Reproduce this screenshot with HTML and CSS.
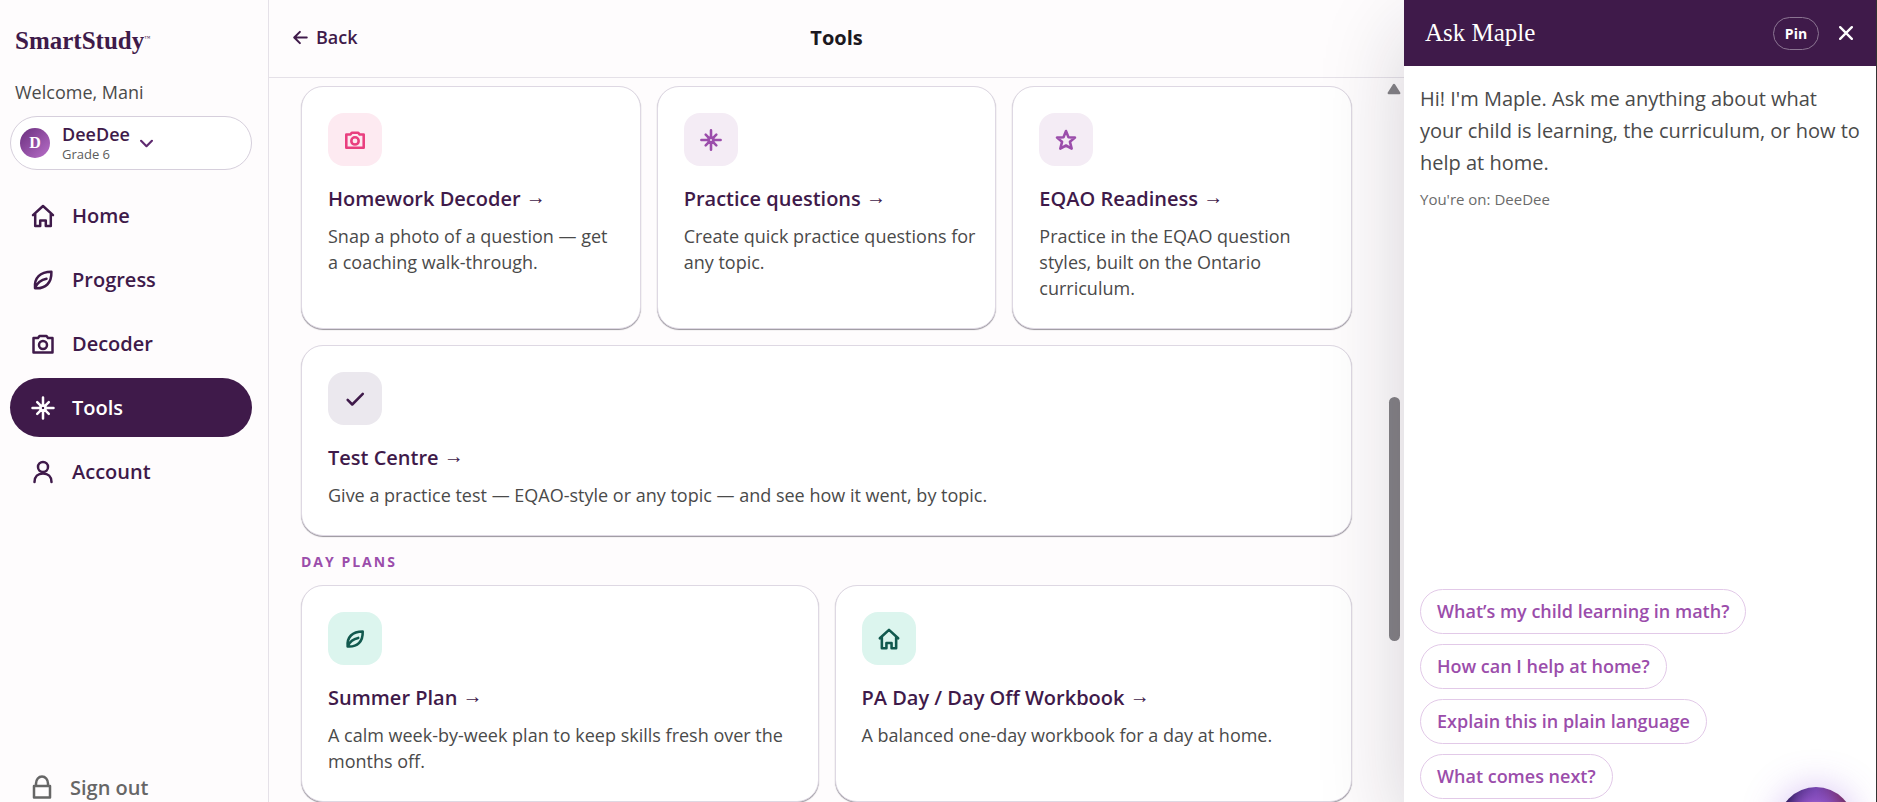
FILE: index.html
```html
<!DOCTYPE html>
<html lang="en">
<head>
<meta charset="utf-8">
<title>SmartStudy – Tools</title>
<link rel="stylesheet" href="styles.css">
</head>
<body>
<svg class="sprite" aria-hidden="true">
  <symbol id="i-home" viewBox="0 0 24 24"><path d="M2 11.2 12 2l10 9.2M4.2 10v12h5v-5.6h5.6V22h5V10"/></symbol>
  <symbol id="i-leaf" viewBox="0 0 24 24"><path d="M4 20.2C3 10 9 3.8 20.4 3.8 20.8 15 14.500 21 4 20.200zM4.200 19.500C6.500 14.500 10 12 15.500 10.800"/></symbol>
  <symbol id="i-camera" viewBox="0 0 24 24"><path d="M2.500 6H7l1.500-2h7L17 6h4.500v14.500h-19z"/><circle cx="12" cy="13" r="4"/></symbol>
  <symbol id="i-spark" viewBox="0 0 24 24"><circle cx="12" cy="12" r="2.600"/><path d="M12 1.500v7.900M12 14.600v7.900M1.500 12h7.900M14.600 12h7.900M6.200 6.200l4 4M13.800 13.800l4 4M17.800 6.200l-4 4M10.200 13.800l-4 4"/></symbol>
  <symbol id="i-user" viewBox="0 0 24 24"><circle cx="12" cy="7" r="5"/><path d="M3.500 22c0-5.500 3.500-8.500 8.500-8.500s8.500 3 8.500 8.500"/></symbol>
  <symbol id="i-star" viewBox="0 0 24 24"><path d="m12 2.200 2.700 6.700 7.100.5-5.500 4.600 1.900 7.400L12 18l-6.200 3.400L7.700 14 2.200 9.400l7.100-.5z"/></symbol>
  <symbol id="i-check" viewBox="0 0 24 24"><path d="m4 13 5 5L20.500 6.500"/></symbol>
  <symbol id="i-lock" viewBox="0 0 24 24"><path d="M4 11h16v11.500H4zM6 11V8.500a6 7 0 0 1 12 0V11"/></symbol>
  <symbol id="i-back" viewBox="0 0 24 24"><path d="M22 12H3M11 3l-9 9 9 9"/></symbol>
  <symbol id="i-down" viewBox="0 0 24 24"><path d="m2 7 10 10L22 7"/></symbol>
  <symbol id="i-close" viewBox="0 0 24 24"><path d="m2 2 20 20M22 2 2 22"/></symbol>
</svg>

<div class="app">
  <aside class="sidebar">
    <div class="brand">SmartStudy<sup>™</sup></div>
    <p class="welcome">Welcome, Mani</p>
    <button class="profile" type="button">
      <span class="avatar">D</span>
      <span class="profile-text"><span class="profile-name">DeeDee</span><span class="profile-grade">Grade 6</span></span>
      <svg class="icon chevron"><use href="#i-down"/></svg>
    </button>
    <nav class="nav">
      <a class="nav-item" href="#home"><svg class="icon"><use href="#i-home"/></svg>Home</a>
      <a class="nav-item" href="#progress"><svg class="icon"><use href="#i-leaf"/></svg>Progress</a>
      <a class="nav-item" href="#decoder"><svg class="icon"><use href="#i-camera"/></svg>Decoder</a>
      <a class="nav-item active" href="#tools" aria-current="page"><svg class="icon"><use href="#i-spark"/></svg>Tools</a>
      <a class="nav-item" href="#account"><svg class="icon"><use href="#i-user"/></svg>Account</a>
    </nav>
    <button class="signout" type="button"><svg class="icon"><use href="#i-lock"/></svg>Sign out</button>
  </aside>

  <main class="main">
    <header class="topbar">
      <a class="back" href="#back"><svg class="icon"><use href="#i-back"/></svg>Back</a>
      <h1 class="page-title">Tools</h1>
    </header>
    <div class="scroller">
      <div class="content">
        <section class="cards">
          <a class="card" href="#homework"><span class="tile pink"><svg class="icon"><use href="#i-camera"/></svg></span><h2 class="card-title">Homework Decoder <span class="arrow">→</span></h2><p class="card-text">Snap a photo of a question — get a&nbsp;coaching walk-through.</p></a>
          <a class="card" href="#practice"><span class="tile violet"><svg class="icon"><use href="#i-spark"/></svg></span><h2 class="card-title">Practice questions <span class="arrow">→</span></h2><p class="card-text">Create quick practice questions for any topic.</p></a>
          <a class="card" href="#eqao"><span class="tile violet"><svg class="icon"><use href="#i-star"/></svg></span><h2 class="card-title">EQAO Readiness <span class="arrow">→</span></h2><p class="card-text">Practice in the EQAO question styles, built on the Ontario curriculum.</p></a>
          <a class="card wide" href="#test"><span class="tile plum"><svg class="icon"><use href="#i-check"/></svg></span><h2 class="card-title">Test Centre <span class="arrow">→</span></h2><p class="card-text">Give a practice test — EQAO-style or any topic — and see how it went, by topic.</p></a>
        </section>
        <h2 class="section-title">DAY PLANS</h2>
        <section class="cards two">
          <a class="card" href="#summer"><span class="tile mint"><svg class="icon"><use href="#i-leaf"/></svg></span><h2 class="card-title">Summer Plan <span class="arrow">→</span></h2><p class="card-text">A calm week-by-week plan to keep skills fresh over the months off.</p></a>
          <a class="card" href="#paday"><span class="tile mint"><svg class="icon"><use href="#i-home"/></svg></span><h2 class="card-title">PA Day / Day Off Workbook <span class="arrow">→</span></h2><p class="card-text">A balanced one-day workbook for a day at home.</p></a>
        </section>
      </div>
      <div class="scrollbar" aria-hidden="true">
        <svg class="scroll-up" viewBox="0 0 12 10"><path d="M6 1.500 10.500 8.500h-9z"/></svg>
        <span class="thumb"></span>
      </div>
    </div>
  </main>

  <aside class="maple">
    <header class="maple-head">
      <h2 class="maple-title">Ask Maple</h2>
      <button class="pin" type="button">Pin</button>
      <button class="close" type="button" aria-label="Close"><svg class="icon"><use href="#i-close"/></svg></button>
    </header>
    <div class="maple-body">
      <p class="maple-text">Hi! I'm Maple. Ask me anything about what your child is learning, the curriculum, or how to help at home.</p>
      <p class="maple-context">You're on: DeeDee</p>
    </div>
    <div class="chips">
      <button class="chip" type="button">What’s my child learning in math?</button>
      <button class="chip" type="button">How can I help at home?</button>
      <button class="chip" type="button">Explain this in plain language</button>
      <button class="chip" type="button">What comes next?</button>
    </div>
    <button class="orb" type="button" aria-label="Maple"></button>
  </aside>
</div>
</body>
</html>
```
FILE: styles.css
```css
* { box-sizing: border-box; }

body {
  margin: 0;
  background: #fefcfd;
  color: #3f1a4a;
  font-family: "Open Sans", "Noto Sans", sans-serif;
}

h1, h2, p { margin: 0; }
a { color: inherit; text-decoration: none; }
button { font: inherit; color: inherit; background: none; border: 0; padding: 0; }

.sprite { display: none; }

.icon {
  width: 24px;
  height: 24px;
  flex: none;
  fill: none;
  stroke: currentColor;
  stroke-width: 2.5;
  stroke-linecap: round;
  stroke-linejoin: round;
}

.app {
  display: grid;
  grid-template-columns: 269px minmax(0, 1fr) 472px;
  height: 100vh;
  overflow: hidden;
  border-right: 1px solid #333;
}

/* Sidebar */
.sidebar {
  display: flex;
  flex-direction: column;
  padding: 25px 16px 0 10px;
  border-right: 1px solid #e5e1e8;
}

.brand {
  padding-left: 5px;
  font: bold 25px/32px "Liberation Serif", serif;
}
.brand sup { font-size: 6px; font-weight: normal; line-height: 1; }

.welcome {
  padding-left: 5px;
  margin: 22px 0 11px;
  font-size: 18px;
  line-height: 26px;
  color: #4a4a4a;
}

.profile {
  display: flex;
  align-items: center;
  height: 54px;
  padding: 0 9px;
  border: 1px solid #d6cfdc;
  border-radius: 27px;
  background: #fff;
  text-align: left;
}

.avatar {
  width: 30px;
  height: 30px;
  margin-right: 12px;
  border-radius: 50%;
  background: linear-gradient(135deg, #6a2f7e, #b96fc9);
  color: #fff;
  font: bold 16px/30px "Liberation Serif", serif;
  text-align: center;
}

.profile-text { display: flex; flex-direction: column; }
.profile-name { font-size: 18px; line-height: 22px; font-weight: 600; }
.profile-grade { font-size: 13px; line-height: 18px; color: #5c5c5c; }
.chevron { width: 13px; height: 13px; margin-left: 10px; stroke-width: 4; color: #5f2a70; }

.nav { display: flex; flex-direction: column; gap: 5px; margin-top: 16px; }

.nav-item {
  display: flex;
  align-items: center;
  gap: 17px;
  height: 59px;
  padding: 0 21px;
  border-radius: 30px;
  font-size: 20px;
  font-weight: 600;
}
.nav-item.active { background: #3f1a4a; color: #fff; }

.signout {
  display: flex;
  align-items: center;
  gap: 16px;
  height: 30px;
  margin-top: auto;
  padding: 0 20px;
  font-size: 20px;
  font-weight: 600;
  color: #666;
}

/* Main column */
.main { display: flex; flex-direction: column; min-height: 0; }

.topbar {
  display: grid;
  grid-template-columns: 1fr auto 1fr;
  align-items: center;
  height: 78px;
  flex: none;
  padding: 0 24px 3px;
  border-bottom: 1px solid #e5e1e8;
}

.back {
  display: flex;
  align-items: center;
  gap: 8px;
  font-size: 18px;
  font-weight: 600;
}
.back .icon { width: 15px; height: 15px; stroke-width: 3.2; }

.page-title { font-size: 20px; font-weight: 700; color: #1c1820; }

.scroller { display: flex; flex: 1; min-height: 0; }
.content { flex: 1; min-width: 0; padding: 8px 32px; }

.scrollbar {
  display: flex;
  flex-direction: column;
  align-items: center;
  width: 20px;
  flex: none;
  padding: 5px 0 0;
}
.scroll-up { width: 14px; height: 12px; flex: none; fill: #858387; stroke: #858387; stroke-width: 2; stroke-linejoin: round; }
.thumb { width: 11px; height: 34%; margin-top: 302px; border-radius: 6px; background: #858387; }

.cards { display: grid; grid-template-columns: repeat(3, minmax(0, 1fr)); gap: 16px; }
.cards.two { grid-template-columns: repeat(2, minmax(0, 1fr)); }
.wide { grid-column: 1 / -1; }

.card {
  padding: 26px 18px 27px 26px;
  border: 1px solid #ded8e3;
  border-radius: 22px;
  background: #fff;
  box-shadow: 0 1px 1px #98949c;
}

.tile {
  display: grid;
  place-items: center;
  width: 54px;
  height: 53px;
  border-radius: 16px;
}
.tile .icon { width: 22px; height: 22px; stroke-width: 2.8; }
.pink { background: #fdeaf1; color: #e93f7f; }
.violet { background: #f4ecf5; color: #9b4dab; }
.plum { background: #ebe8ee; color: #3f1a4a; }
.mint { background: #dcf5ee; color: #12594e; }

.card-title { margin: 18px 0 9px; font-size: 20px; line-height: 30px; font-weight: 600; }
.arrow { font: 20px/1 "Liberation Serif", serif; vertical-align: 2px; }
.card-text { font-size: 18px; line-height: 26px; color: #4a4a4a; }

.section-title {
  margin: 16px 0 13px;
  font-size: 14px;
  line-height: 20px;
  font-weight: 700;
  letter-spacing: 2px;
  color: #9b4dab;
}

/* Assistant panel */
.maple {
  position: relative;
  display: flex;
  flex-direction: column;
  min-height: 0;
  background: #fff;
  box-shadow: 0 30px 80px rgba(28, 20, 44, 0.18);
}

.maple-head {
  display: flex;
  align-items: center;
  height: 66px;
  padding: 0 23px 0 21px;
  background: #3f1a4a;
  color: #fff;
}
.maple-title { flex: 1; font: 25px/32px "Liberation Serif", serif; }

.pin {
  width: 46px;
  height: 33px;
  border: 1px solid #8b7592;
  border-radius: 17px;
  font-size: 14px;
  font-weight: 700;
}
.close { display: flex; margin-left: 20px; }
.close .icon { width: 14px; height: 14px; stroke-width: 4; }

.maple-body { flex: 1; padding: 17px 16px; }
.maple-text { font-size: 20px; line-height: 32px; color: #4a4a4a; }
.maple-context { margin-top: 9px; font-size: 15px; line-height: 22px; color: #6b6b6b; }

.chips { display: flex; flex-direction: column; align-items: flex-start; gap: 10px; padding: 0 16px 3px; }

.chip {
  height: 45px;
  padding: 0 16px 2px;
  border: 1px solid #e2c9e8;
  border-radius: 23px;
  font-size: 18px;
  font-weight: 600;
  color: #9b4dab;
}

.orb {
  position: absolute;
  right: 22px;
  bottom: -61px;
  width: 76px;
  height: 76px;
  border-radius: 50%;
  background: radial-gradient(circle at 50% 40%, #c79af0 0, #8a50c0 30%, rgba(90, 40, 130, 0) 62%), conic-gradient(from 0deg, #6a3fa8, #7a2c60 40deg, #40204f 90deg, #2a1450 270deg, #241650 310deg, #6a3fa8);
  box-shadow: 0 0 36px rgba(140, 80, 220, 0.35);
}
```
